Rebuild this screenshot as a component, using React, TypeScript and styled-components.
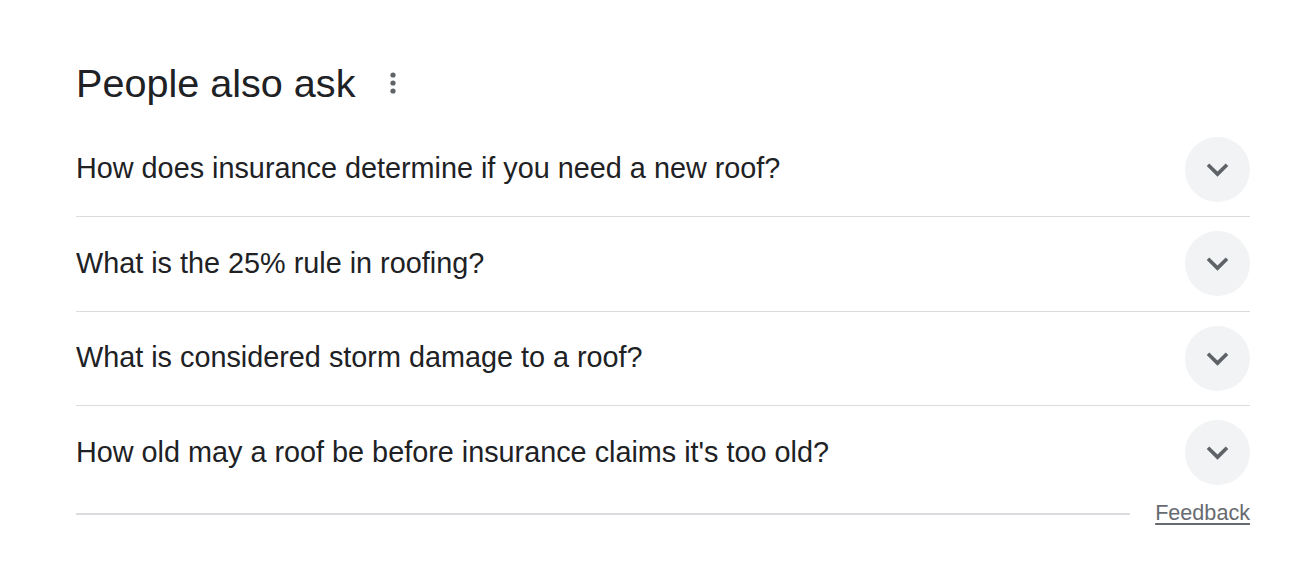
import React from "react";
import styled, { createGlobalStyle } from "styled-components";

const Global = createGlobalStyle`
  html, body { margin: 0; padding: 0; background: #ffffff; }
  body { font-family: "Liberation Sans", Arial, sans-serif; color: #202124; }
`;

const Page = styled.div`
  width: 1314px;
  height: 574px;
  box-sizing: border-box;
  padding: 57px 64px 0 76px;
`;

const Header = styled.div`
  display: flex;
  align-items: center;
  height: 52px;
  margin-bottom: 13.5px;
`;

const Title = styled.h2`
  margin: 0;
  font-family: "Liberation Sans", Arial, sans-serif;
  font-weight: 400;
  font-size: 39.6px;
  line-height: 52px;
  color: #202124;
`;

const MenuButton = styled.div`
  width: 24px;
  height: 24px;
  margin-left: 26px;
  display: flex;
  align-items: center;
  justify-content: center;
`;

const List = styled.div`
  display: flex;
  flex-direction: column;
`;

const Row = styled.div<{ $last?: boolean }>`
  display: flex;
  align-items: center;
  justify-content: space-between;
  height: 93.5px;
  border-bottom: ${(p) => (p.$last ? "none" : "1px solid #dadce0")};
`;

const Question = styled.span`
  font-size: 28.8px;
  line-height: 36px;
  color: #202124;
  margin-top: -2px;
`;

const Expander = styled.div`
  width: 65px;
  height: 65px;
  border-radius: 50%;
  background: #f1f3f4;
  display: flex;
  align-items: center;
  justify-content: center;
  flex-shrink: 0;
`;

const Footer = styled.div`
  display: flex;
  align-items: center;
  gap: 25px;
  margin-top: 0;
  height: 26px;
`;

const Rule = styled.div`
  flex: 1;
  height: 2px;
  background: #dadce0;
  margin-top: 2px;
`;

const Feedback = styled.a`
  font-size: 21.6px;
  line-height: 26px;
  color: #676b70;
  text-decoration: underline;
  text-underline-offset: 3px;
  cursor: pointer;
`;

const questions = [
  "How does insurance determine if you need a new roof?",
  "What is the 25% rule in roofing?",
  "What is considered storm damage to a roof?",
  "How old may a roof be before insurance claims it's too old?",
];

const MoreIcon = () => (
  <svg width="24" height="24" viewBox="0 0 24 24">
    <circle cx="12" cy="4" r="2.6" fill="#5f6368" />
    <circle cx="12" cy="12" r="2.6" fill="#5f6368" />
    <circle cx="12" cy="20" r="2.6" fill="#5f6368" />
  </svg>
);

const Chevron = () => (
  <svg width="43" height="43" viewBox="0 0 24 24">
    <path d="M16.59 8.59L12 13.17 7.41 8.59 6 10l6 6 6-6z" fill="#5f6368" />
  </svg>
);

export default function App() {
  return (
    <>
      <Global />
      <Page>
        <Header>
          <Title>People also ask</Title>
          <MenuButton>
            <MoreIcon />
          </MenuButton>
        </Header>
        <List>
          {questions.map((q, i) => (
            <Row key={q} $last={i === questions.length - 1}>
              <Question>{q}</Question>
              <Expander>
                <Chevron />
              </Expander>
            </Row>
          ))}
        </List>
        <Footer>
          <Rule />
          <Feedback>Feedback</Feedback>
        </Footer>
      </Page>
    </>
  );
}
